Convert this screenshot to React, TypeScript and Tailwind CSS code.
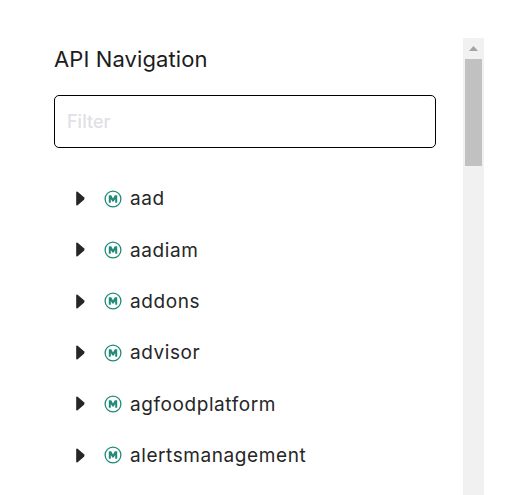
const items = ["aad", "aadiam", "addons", "advisor", "agfoodplatform", "alertsmanagement"];

function Caret() {
  return (
    <svg width="9" height="15" viewBox="0 0 10 14" preserveAspectRatio="none" className="shrink-0 mb-[2px]">
      <path d="M1.8 0.6 L8.9 5.8 Q10 7 8.9 8.2 L1.8 13.4 Q0.2 14 0.2 12.6 V1.4 Q0.2 0 1.8 0.6 Z" fill="#262626" />
    </svg>
  );
}

function ModuleIcon() {
  return (
    <svg width="18" height="18" viewBox="0 0 18 18" className="shrink-0 mb-[2px]">
      <circle cx="9" cy="9" r="7.9" fill="none" stroke="#1f8a78" strokeWidth="1.3" />
      <path d="M4.8 12.7 V5.3 H7.2 L9 8.6 L10.8 5.3 H13.2 V12.7 H11.2 V8.9 L9.7 11.6 H8.3 L6.8 8.9 V12.7 Z" fill="#1f8a78" />
    </svg>
  );
}

export default function App() {
  return (
    <div className="h-[495px] w-[508px] overflow-hidden bg-white flex font-['Inter',sans-serif]">
      <div className="w-[463px] shrink-0 pl-[54px] pr-[27px] pt-[45px]">
        <h2 className="text-[22px] leading-[28px] text-[#1c1c1c] font-normal tracking-[0.1px]">API Navigation</h2>
        <input
          type="text"
          placeholder="Filter"
          className="mt-[22px] block w-[382px] h-[53px] border border-black rounded-[5px] pl-[12px] pr-[13px] text-[18px] font-medium placeholder:text-[#e0e0e6] outline-none"
        />
        <ul className="mt-[26px] flex flex-col">
          {items.map((name) => (
            <li key={name} className="h-[51.3px] shrink-0 flex items-center pl-[22px] text-[#262626] text-[19px] font-normal tracking-[0.58px]">
              <Caret />
              <span className="ml-[19px] flex"><ModuleIcon /></span>
              <span className="ml-[8px]">{name}</span>
            </li>
          ))}
        </ul>
      </div>
      <div className="mt-[38px] w-[21px] h-[457px] shrink-0 bg-[#f1f1f1] flex flex-col items-center">
        <svg width="9" height="6" viewBox="0 0 9 6" className="mt-[8px]">
          <path d="M4.5 0 L9 5 H0 Z" fill="#a3a3a3" />
        </svg>
        <div className="mt-[7px] w-[17px] h-[107px] bg-[#c1c1c1]" />
      </div>
    </div>
  );
}
